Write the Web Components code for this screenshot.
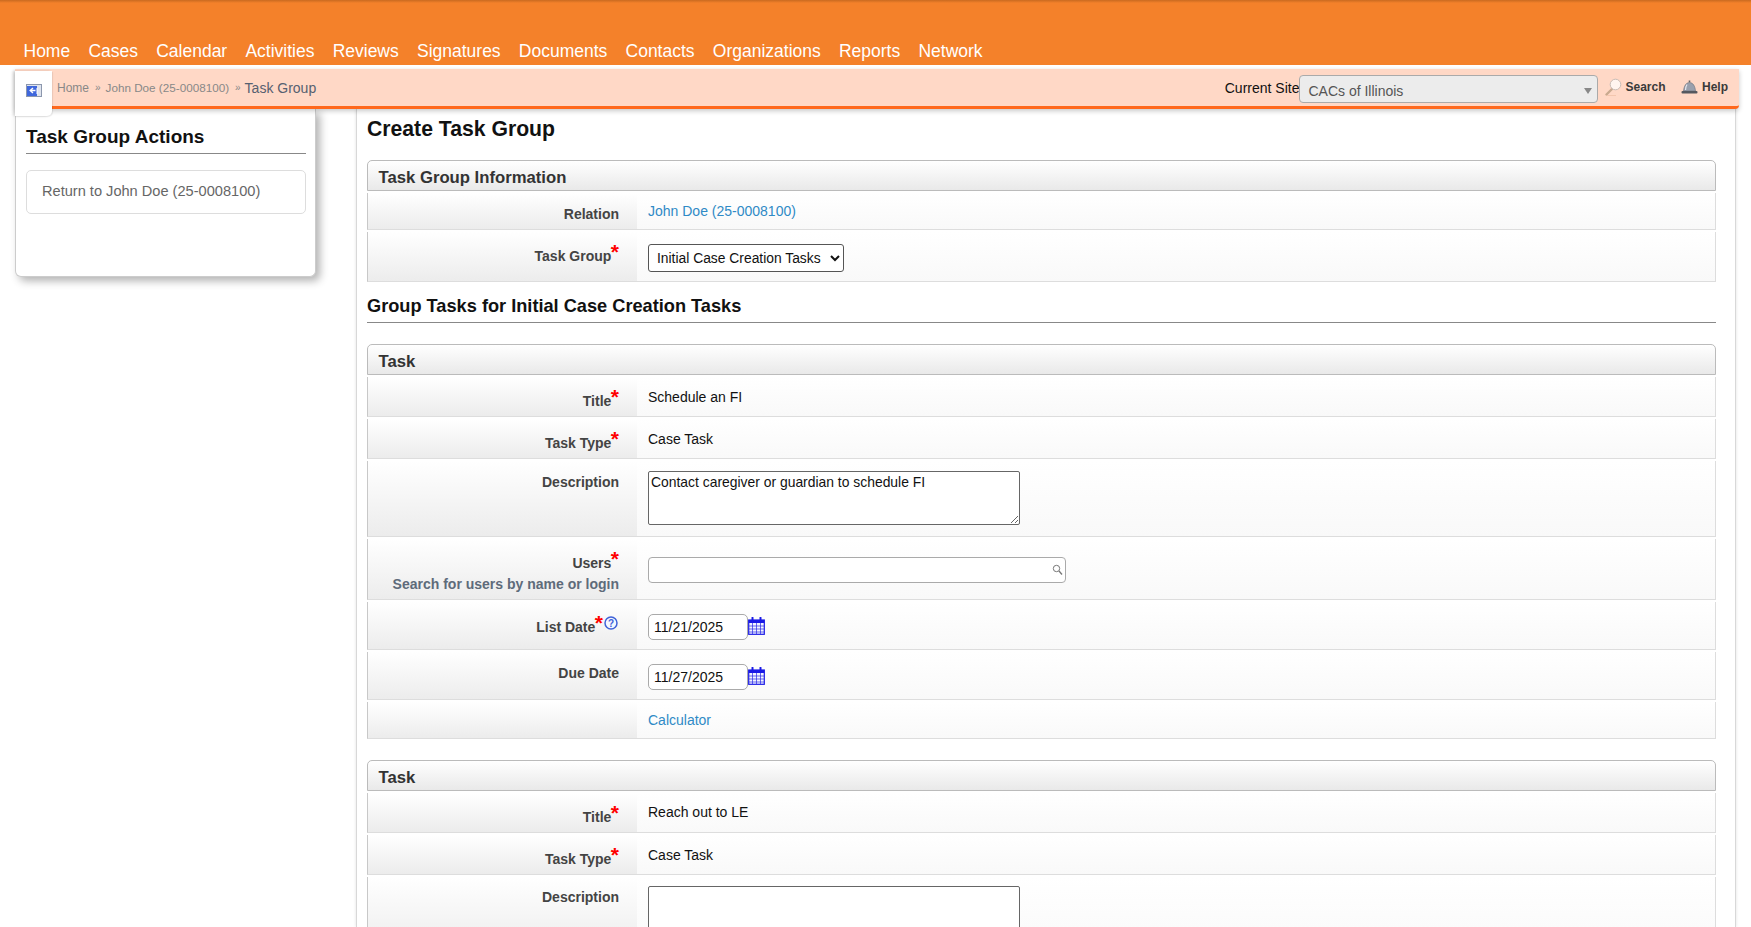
<!DOCTYPE html>
<html lang="en"><head><meta charset="utf-8"><title>Create Task Group</title>
<style>
html,body{margin:0;padding:0;height:927px;overflow:hidden;background:#fff;font-family:"Liberation Sans",Arial,sans-serif;font-size:14px}
a{color:#2f8ac6;text-decoration:none}
</style></head><body>
<app-page>
  <app-header>
    <nav-link>Home</nav-link><nav-link>Cases</nav-link><nav-link>Calendar</nav-link><nav-link>Activities</nav-link><nav-link>Reviews</nav-link><nav-link>Signatures</nav-link><nav-link>Documents</nav-link><nav-link>Contacts</nav-link><nav-link>Organizations</nav-link><nav-link>Reports</nav-link><nav-link>Network</nav-link>
  </app-header>
  <crumb-bar></crumb-bar>
  <page-columns>
    <side-card slot="side" heading="Task Group Actions"><side-link>Return to John Doe (25-0008100)</side-link></side-card>
    <main-panel slot="main" heading="Create Task Group">
      <form-section heading="Task Group Information">
        <form-row label="Relation" h="37" pad="8" lpad="11"><a href="#">John Doe (25-0008100)</a></form-row>
        <form-row label="Task Group" req h="50" pad="12"><plain-select>Initial Case Creation Tasks</plain-select></form-row>
      </form-section>
      <sub-heading>Group Tasks for Initial Case Creation Tasks</sub-heading>
      <form-section heading="Task">
        <form-row label="Title" req h="40" pad="10">Schedule an FI</form-row>
        <form-row label="Task Type" req h="40" pad="10">Case Task</form-row>
        <form-row label="Description" h="76" pad="10" lpad="11"><text-box>Contact caregiver or guardian to schedule FI</text-box></form-row>
        <form-row label="Users" req sub="Search for users by name or login" h="61" pad="18"><user-search></user-search></form-row>
        <form-row label="List Date" req help h="48" pad="12" lpad="14"><date-field value="11/21/2025"></date-field></form-row>
        <form-row label="Due Date" h="48" pad="12" lpad="11"><date-field value="11/27/2025"></date-field></form-row>
        <form-row h="37" pad="8"><a href="#">Calculator</a></form-row>
      </form-section>
      <form-section heading="Task">
        <form-row label="Title" req h="40" pad="9">Reach out to LE</form-row>
        <form-row label="Task Type" req h="40" pad="10">Case Task</form-row>
        <form-row label="Description" h="76" pad="9" lpad="10"><text-box></text-box></form-row>
      </form-section>
    </main-panel>
  </page-columns>
</app-page>
<script>
const def=(name,css,html,init)=>{customElements.define(name,class extends HTMLElement{
  connectedCallback(){ if(this.shadowRoot)return; const r=this.attachShadow({mode:'open'});
    r.innerHTML='<style>'+css+'</style>'+(typeof html==='function'?html(this):html); if(init)init(this,r);}
});};
def('app-page',':host{display:block;width:1751px;height:927px;overflow:hidden}','<slot></slot>');
def('app-header',':host{display:flex;align-items:flex-end;gap:18.2px;height:65px;box-sizing:border-box;padding:0 0 2px 23.5px;background:linear-gradient(#c96a20 0,#f4812a 3px,#f4812a 100%)}','<slot></slot>');
def('nav-link',':host{display:block;color:#fff;font-size:17.5px;line-height:24px}','<slot></slot>');
def('crumb-bar',`:host{display:block;position:relative;z-index:2;margin:4px 12px 0 15px;height:40px}
.bar{display:flex;align-items:center;box-sizing:border-box;height:40px;background:#ffd8c6;border-bottom:3px solid #ff681c;border-radius:0 0 4px 0;box-shadow:0 2px 5px rgba(0,0,0,.22);padding-left:42px;color:#888;font-size:12px}
.sep{margin:0 6px;font-size:10px}.jd{font-size:11.7px;margin-left:-1px}.cur{font-size:14px;color:#566070;margin-left:-2px}
.sp{flex:1}.cs{font-size:14px;color:#111;margin-right:0}
.combo{width:299px;height:28px;margin-top:2px;box-sizing:border-box;border:1px solid #aaa;border-radius:4px;background:#ececec;color:#555;font-size:14px;line-height:30px;padding-left:8px;position:relative}
.combo:after{content:"";position:absolute;right:5px;top:12px;border:4px solid transparent;border-top:6px solid #888;border-bottom:0}
.act{display:flex;align-items:center;font-weight:bold;font-size:12px;color:#3a3a3a}
.tab{position:absolute;left:0;top:2px;width:37px;height:45px;background:#fff;border-radius:0 0 5px 0;box-shadow:-2px 0 3px rgba(0,0,0,.14),1px 1px 1px rgba(0,0,0,.08);display:flex;align-items:flex-start;justify-content:center;padding-top:13px;box-sizing:border-box}`,
`<div class="bar"><span>Home</span><span class="sep">»</span><span class="jd">John Doe (25-0008100)</span><span class="sep">»</span><span class="cur">Task Group</span><span class="sp"></span>
<span class="cs">Current Site</span><div class="combo">CACs of Illinois</div>
<span class="act" style="margin-left:7px;margin-bottom:1px"><svg width="17" height="18" viewBox="0 0 17 18"><path d="M7 11 1.5 16.5" stroke="#c9a98f" stroke-width="2.4" stroke-linecap="round"/><circle cx="10.5" cy="6.5" r="5.3" fill="#fff5ef" stroke="#c8bdb6"/><path d="M2 17.5h9" stroke="#f3c6ae" stroke-width="1"/></svg><span style="margin-left:3px">Search</span></span>
<span class="act" style="margin-left:15.500px;margin-right:11px;margin-bottom:2px"><svg width="17" height="14" viewBox="0 0 17 14"><path d="M8.5 0.5v2" stroke="#666" stroke-width="1.6"/><path d="M2.5 11C3 6 5 2.6 8.500 2.600S14 6 14.500 11Z" fill="#9aa0ad" stroke="#6d7078" stroke-width=".6"/><path d="M6 4.500C5 6 4.600 8 4.500 10" stroke="#e4e7ee" stroke-width="1.200" fill="none"/><rect x="0.500" y="11" width="16" height="2.400" rx="1" fill="#55585f"/></svg><span style="margin-left:4px">Help</span></span></div>
<div class="tab"><svg width="16" height="13" viewBox="0 0 16 13"><rect x=".5" y=".5" width="15" height="12" fill="#dfe4ee" stroke="#8c97ad"/><rect x="1" y="2" width="10" height="10" fill="#3f67dc"/><path d="M11 4v6" stroke="#fff"/><path d="M9.500 6.500H5M7 4 4.200 6.500 7 9" stroke="#fff" stroke-width="1.400" fill="none"/></svg></div>`);
def('page-columns',':host{display:grid;grid-template-columns:301px 1380px;column-gap:40px;padding-left:15px;align-items:start}','<slot name="side"></slot><slot name="main"></slot>');
def('side-card',`:host{display:block;box-sizing:border-box;height:168px;background:#fff;border:1px solid #ccc;border-top:0;border-radius:0 0 6px 6px;box-shadow:4px 4px 8px rgba(0,0,0,.3);padding:16px 9px 0 10px}
h2{margin:0 0 16px;font-size:19px;line-height:24px;color:#111;border-bottom:1px solid #888;padding-bottom:4px}`,
h=>`<h2>${h.getAttribute('heading')}</h2><slot></slot>`);
def('side-link',':host{display:block;box-sizing:border-box;height:44px;border:1px solid #ddd;border-radius:5px;padding:10px 15px;line-height:20px;color:#666;font-size:14.6px}','<slot></slot>');
def('main-panel',`:host{display:block;box-sizing:border-box;height:818px;border-left:1px solid #d8d8d8;border-right:1px solid #d8d8d8;box-shadow:0 0 3px rgba(0,0,0,.12);padding:8px 19px 0 10px}
h1{margin:0 0 19px;font-size:21.2px;line-height:24px;color:#111}`,
h=>`<h1>${h.getAttribute('heading')}</h1><slot></slot>`);
def('form-section',`:host{display:block;margin-bottom:20.5px}
.hd{box-sizing:border-box;height:31px;border:1px solid #bbb;border-radius:5px 5px 0 0;background:linear-gradient(#fff,#e9e9e9);padding-left:10.500px;font-weight:bold;font-size:16.700px;line-height:33px;color:#333;margin-bottom:2px}`,
h=>`<div class="hd">${h.getAttribute('heading')}</div><slot></slot>`);
def('sub-heading',':host{display:block;margin:-8px 0 21.5px;font-weight:bold;font-size:18.200px;line-height:22px;color:#111;border-bottom:1px solid #888;padding-bottom:5px}','<slot></slot>');
def('form-row',`:host{display:grid;grid-template-columns:269px 1fr;margin-bottom:2px;box-sizing:border-box;border:1px solid #ddd;border-width:0 1px 1px 1px;border-left-color:#c8c8c8;color:#111;font-size:14px}
.l{background:linear-gradient(#fff,#ececec);text-align:right;padding:var(--lp) 18px 0 0;font-weight:bold;color:#444;line-height:20px}
.v{background:linear-gradient(#fff,#f9f9f9);padding:var(--vp) 0 0 11px;line-height:20px}
.s{color:#ff0000;font-size:21px;line-height:10px;vertical-align:-1px;font-weight:bold;display:inline-block;margin-left:-.5px;position:relative;top:-3px}
.sub{color:#5e6b7a;margin-top:1px}.q{display:inline-block;vertical-align:2px;margin:0 1px 0 1px;width:14px;height:14px}`,
h=>{const rq=h.hasAttribute('req'),help=h.hasAttribute('help'),sub=h.getAttribute('sub');
 const p=+(h.getAttribute('pad')||10), lp=h.getAttribute('lpad')||(rq?14:12);
 h.style.minHeight=h.getAttribute('h')+'px';
 return `<div class="l" style="--lp:${sub?14:lp}px">${h.getAttribute('label')||''}${rq?'<span class="s">*</span>':''}${help?'<svg class="q" viewBox="0 0 14 14"><circle cx="7" cy="7" r="6" fill="#f4f7ff" stroke="#3f62d8" stroke-width="1.500"/><text x="7" y="10.500" text-anchor="middle" font-size="10" font-weight="bold" font-family="Liberation Sans" fill="#3f62d8">?</text></svg>':''}${sub?`<div class="sub">${sub}</div>`:''}</div><div class="v" style="--vp:${p}px"><slot></slot></div>`;});
def('plain-select',`:host{display:block}select{width:196px;height:28px;box-sizing:border-box;background:#fff;border:1px solid #555;border-radius:3px;font:13.85px "Liberation Sans",Arial,sans-serif;color:#111;padding-left:4px}`,
h=>`<select><option>${h.textContent}</option></select>`);
def('text-box',`:host{display:block}textarea{display:block;margin:0;width:372px;height:54px;box-sizing:border-box;border:1px solid #666;border-radius:2px;font:13.9px/16px "Liberation Sans",Arial,sans-serif;color:#111;padding:2px 2px;background:#fff}`,
h=>`<textarea>${h.textContent}</textarea>`);
def('user-search',`:host{display:block;position:relative;width:418px;height:26px;box-sizing:border-box;border:1px solid #aaa;border-radius:4px;background:#fff}
svg{position:absolute;right:2px;top:6px}`,
`<svg width="11" height="11" viewBox="0 0 11 11"><circle cx="4.500" cy="4.500" r="3.200" fill="none" stroke="#777" stroke-width="1"/><path d="M7 7 10 10.500" stroke="#777" stroke-width="1.300"/></svg>`);
def('date-field',`:host{display:flex;align-items:flex-start}
input{width:100px;height:26px;box-sizing:border-box;border:1px solid #aaa;border-radius:5px;font:14px "Liberation Sans",Arial,sans-serif;color:#111;padding:0 4px 0 5px;background:#fff;margin:0}
svg{margin-top:3px}`,
h=>`<input value="${h.getAttribute('value')}"><svg width="17" height="18" viewBox="0 0 17 18"><rect x=".7" y="3" width="15.600" height="14.300" fill="#f2f4ff" stroke="#1a1ae6" stroke-width="1.200"/><rect x=".7" y="3" width="15.600" height="3" fill="#1a1ae6"/><path d="M1 9h15M1 12h15M1 15h15M4.500 6v11M8.500 6v11M12.500 6v11" stroke="#2a2ae6" stroke-width=".7"/><path d="M4.500 .7v4M12.500 .7v4" stroke="#1a1ae6" stroke-width="2" stroke-linecap="round"/></svg>`);
</script>
</body></html>
